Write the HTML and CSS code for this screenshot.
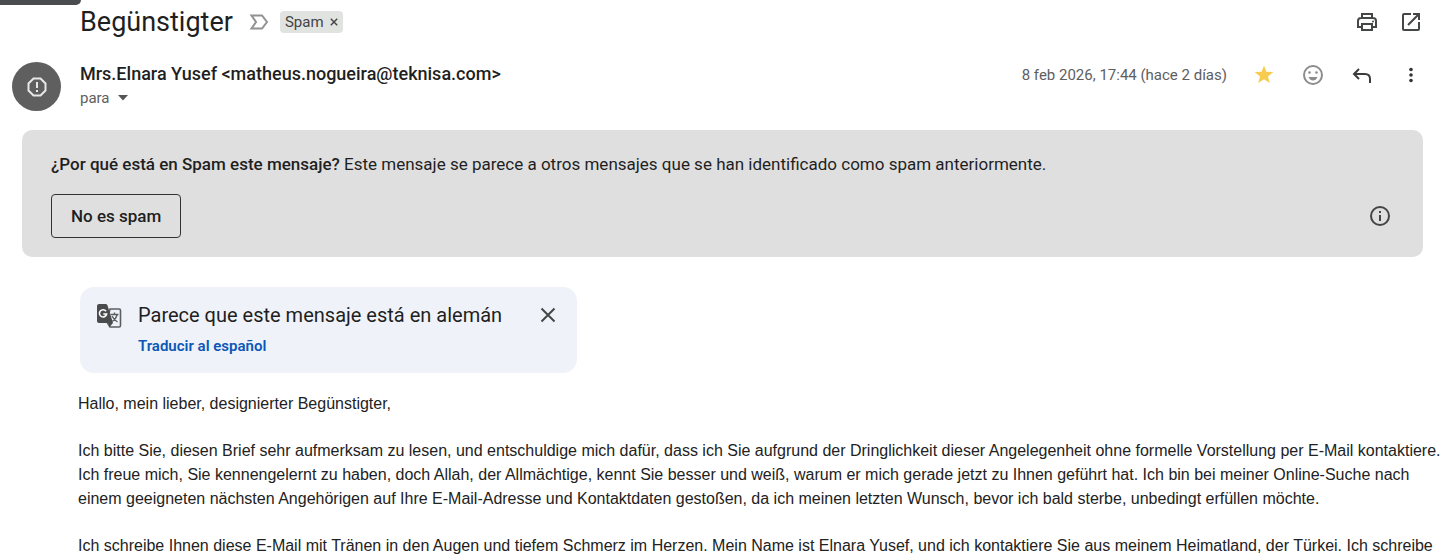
FILE: index.html
```html
<!DOCTYPE html>
<html lang="es">
<head>
<meta charset="utf-8">
<title>Begünstigter</title>
<link rel="stylesheet" href="styles.css">
</head>
<body>
<div class="status-strip"></div>
<main class="mail">
  <header class="subject">
    <h1 class="subject-title">Begünstigter</h1>
    <svg class="marker" width="20" height="16" viewBox="0 0 20 16" fill="none" stroke="#929292" stroke-width="2"><path d="M2.500 1.500H13L18 8l-5 6.500H2.500L7 8z"/></svg>
    <span class="label">Spam <button class="label-remove" aria-label="Quitar etiqueta"><svg width="8" height="8" viewBox="0 0 8 8" stroke="#444" stroke-width="1.400"><path d="M.8.8l6.400 6.400M7.200.8L.8 7.200"/></svg></button></span>
    <div class="subject-tools">
      <button class="icon-button" aria-label="Imprimir"><svg width="24" height="24" viewBox="0 0 24 24" fill="none" stroke="#444746" stroke-width="2"><path d="M7 8V4h10v4M7 17H3v-6q0-3 3-3h12q3 0 3 3v6h-4"/><path d="M7 14h10v6H7z"/><circle cx="18" cy="11.500" r="1" fill="#444746" stroke="none"/></svg></button>
      <button class="icon-button" aria-label="Abrir en una ventana nueva"><svg width="24" height="24" viewBox="0 0 24 24" fill="none" stroke="#444746" stroke-width="2"><path d="M12 4H5q-1 0-1 1v14q0 1 1 1h14q1 0 1-1v-7M14 4h6v6M20 4L9 15"/></svg></button>
    </div>
  </header>

  <section class="sender">
    <span class="avatar"><svg width="24" height="24" viewBox="0 0 24 24" fill="none" stroke="#e8e8e8" stroke-width="2"><path d="M8.500 3.500h7l5 5v7l-5 5h-7l-5-5v-7z"/><path d="M12 7v6M12 15v2"/></svg></span>
    <div class="sender-info">
      <span class="sender-name">Mrs.Elnara Yusef &lt;matheus.nogueira@teknisa.com&gt;</span>
      <button class="recipient">para <svg width="10" height="6" viewBox="0 0 10 6" fill="#555"><path d="M0 0h10L5 5.500z"/></svg></button>
    </div>
    <div class="sender-tools">
      <time class="date">8 feb 2026, 17:44 (hace 2 días)</time>
      <button class="icon-button" aria-label="Destacado"><svg width="24" height="24" viewBox="0 0 24 24" fill="#f7cb4d"><path d="M12 2.500l2.400 6.300 6.900.3-5.400 4.300 1.900 6.600L12 16.200 6.200 20l1.900-6.600L2.700 9.100l6.900-.3z"/></svg></button>
      <button class="icon-button" aria-label="Añadir reacción"><svg width="24" height="24" viewBox="0 0 24 24" fill="#8d8d8d"><circle cx="12" cy="12" r="9" fill="none" stroke="#8d8d8d" stroke-width="2"/><circle cx="8.500" cy="9.500" r="1.300"/><circle cx="15.500" cy="9.500" r="1.300"/><path d="M7.500 14h9q-1.500 3.500-4.500 3.500T7.500 14z"/></svg></button>
      <button class="icon-button" aria-label="Responder"><svg width="24" height="24" viewBox="0 0 24 24" fill="none" stroke="#3c3c3c" stroke-width="2"><path d="M9 6L4 11l5 5M4 11h11q5 0 5 5v4"/></svg></button>
      <button class="icon-button" aria-label="Más"><svg width="24" height="24" viewBox="0 0 24 24" fill="#333"><circle cx="12" cy="6.500" r="1.800"/><circle cx="12" cy="12" r="1.800"/><circle cx="12" cy="17.500" r="1.800"/></svg></button>
    </div>
  </section>

  <section class="spam-notice">
    <p class="spam-text"><strong class="spam-question">¿Por qué está en Spam este mensaje?</strong> Este mensaje se parece a otros mensajes que se han identificado como spam anteriormente.</p>
    <div class="spam-actions">
      <button class="not-spam">No es spam</button>
      <button class="icon-button" aria-label="Más información"><svg width="24" height="24" viewBox="0 0 24 24" fill="none" stroke="#444" stroke-width="2"><circle cx="12" cy="12" r="9"/><path d="M12 11v6M12 7v2"/></svg></button>
    </div>
  </section>

  <section class="translate">
    <svg class="translate-icon" width="26" height="26" viewBox="0 0 26 26"><path d="M14 6h9q1.500 0 1.500 1.500v15q0 1.500-1.500 1.500h-9l-3-5z" fill="#eff3f9" stroke="#5c5f61" stroke-width="1.600"/><path d="M3 1h7q1 0 1.500 1.500L17 20H3q-2 0-2-2V3q0-2 2-2z" fill="#494b4d"/><path d="M12.500 20H17l-3.500 4z" fill="#494b4d"/><path d="M10 8.300A3.600 3.600 0 1 0 10.600 11H7.300" fill="none" stroke="#fff" stroke-width="1.600"/><path d="M14.500 11.500h8M18.500 9.500v2M21.300 11.500q-1 4-5 7M16 13q2 4 5.500 6" fill="none" stroke="#5c5f61" stroke-width="1.400"/></svg>
    <div class="translate-copy">
      <span class="translate-title">Parece que este mensaje está en alemán</span>
      <a class="translate-link" href="#">Traducir al español</a>
    </div>
    <button class="icon-button" aria-label="Cerrar"><svg width="24" height="24" viewBox="0 0 24 24" stroke="#444746" stroke-width="2"><path d="M5.500 5.500l13 13M18.500 5.500l-13 13"/></svg></button>
  </section>

  <article class="message" lang="de">
    <p>Hallo, mein lieber, designierter Begünstigter,</p>
    <p>Ich bitte Sie, diesen Brief sehr aufmerksam zu lesen, und entschuldige mich dafür, dass ich Sie aufgrund der Dringlichkeit dieser Angelegenheit ohne formelle Vorstellung per E-Mail kontaktiere. Ich freue mich, Sie kennengelernt zu haben, doch Allah, der Allmächtige, kennt Sie besser und weiß, warum er mich gerade jetzt zu Ihnen geführt hat. Ich bin bei meiner Online-Suche nach einem geeigneten nächsten Angehörigen auf Ihre E-Mail-Adresse und Kontaktdaten gestoßen, da ich meinen letzten Wunsch, bevor ich bald sterbe, unbedingt erfüllen möchte.</p>
    <p>Ich schreibe Ihnen diese E-Mail mit Tränen in den Augen und tiefem Schmerz im Herzen. Mein Name ist Elnara Yusef, und ich kontaktiere Sie aus meinem Heimatland, der Türkei. Ich schreibe</p>
  </article>
</main>
</body>
</html>
```
FILE: styles.css
```css
* { box-sizing: border-box; }
html, body { height: 100%; }
body {
  margin: 0;
  overflow: hidden;
  background: #fff;
  color: #1f1f1f;
  font-family: Roboto, "Liberation Sans", sans-serif;
}
h1, p { margin: 0; }
button {
  padding: 0;
  border: 0;
  background: none;
  color: inherit;
  font: inherit;
}
svg { display: block; flex: none; }
.status-strip {
  position: absolute;
  top: 0;
  left: 0;
  width: 81px;
  height: 5px;
  border-radius: 0 0 5px 0;
  background: #4b4c50;
}
.mail { padding: 0 17px 0 12px; }
.icon-button { display: flex; flex: none; }

.subject {
  display: flex;
  align-items: center;
  height: 44px;
  padding-left: 68px;
}
.subject-title {
  font-size: 27px;
  line-height: 36px;
  font-weight: 400;
}
.marker { margin: 0 11px 0 16px; }
.label {
  display: flex;
  align-items: center;
  gap: 6px;
  height: 22px;
  padding: 0 5px;
  border-radius: 4px;
  background: #e1e3e1;
  color: #444;
  font-size: 15px;
}
.label-remove { display: flex; }
.subject-tools { display: flex; gap: 20px; margin-left: auto; }

.sender { display: flex; margin-top: 18px; }
.avatar {
  display: grid;
  place-items: center;
  flex: none;
  width: 49px;
  height: 49px;
  border-radius: 50%;
  background: #5f5f5f;
}
.sender-info { display: flex; flex-direction: column; margin-left: 19px; }
.sender-name { font-size: 18px; line-height: 24px; font-weight: 500; }
.recipient {
  display: flex;
  align-items: center;
  gap: 8px;
  color: #5e5e5e;
  font-size: 15px;
  line-height: 24px;
}
.sender-tools {
  display: flex;
  align-items: center;
  gap: 25px;
  height: 26px;
  margin-left: auto;
}
.date { color: #5e5e5e; font-size: 15px; line-height: 24px; }

.spam-notice {
  margin: 19px 0 0 10px;
  padding: 22px 31px 19px 29px;
  border-radius: 10px;
  background: #dfdfdf;
}
.spam-text { font-size: 17px; line-height: 24px; }
.spam-question { font-weight: 500; }
.spam-actions {
  display: flex;
  align-items: center;
  justify-content: space-between;
  margin-top: 18px;
}
.not-spam {
  height: 44px;
  padding: 0 19px;
  border: 1px solid #333;
  border-radius: 4px;
  font-size: 17px;
  font-weight: 500;
}

.translate {
  display: flex;
  width: fit-content;
  margin: 30px 0 0 68px;
  padding: 16px 17px 15px 16px;
  border-radius: 14px;
  background: #eff3f9;
}
.translate-copy {
  display: flex;
  flex-direction: column;
  gap: 7px;
  margin: 0 34px 0 16px;
}
.translate-title { font-size: 20px; line-height: 24px; }
.translate-link {
  color: #0b57b7;
  font-size: 15px;
  line-height: 24px;
  font-weight: 600;
  text-decoration: none;
}

.message {
  display: flex;
  flex-direction: column;
  gap: 23px;
  margin: 19px -19px 0 66px;
  color: #222;
  font-family: "Liberation Sans", Arial, sans-serif;
  font-size: 16px;
  line-height: 24px;
}
```
